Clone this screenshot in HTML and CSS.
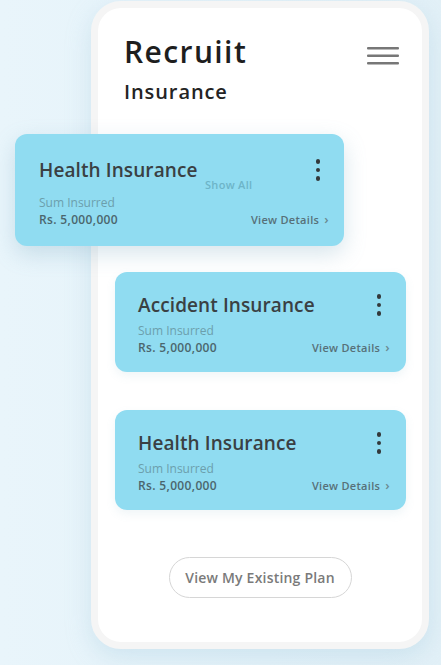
FILE: index.html
```html
<!DOCTYPE html>
<html>
<head>
<meta charset="utf-8">
<link rel="stylesheet" href="styles.css">
</head>
<body>
<div class="phone">
  <div class="screen">
    <header class="top">
      <div class="brand">
        <h1 class="title">Recruiit</h1>
        <h2 class="subtitle">Insurance</h2>
      </div>
      <svg class="menu" width="32" height="20" viewBox="0 0 32 20">
        <rect x="0" y="1" width="32" height="2.6" rx="1" fill="#777"/>
        <rect x="0" y="8.5" width="32" height="2.6" rx="1" fill="#777"/>
        <rect x="0" y="16" width="32" height="2.6" rx="1" fill="#777"/>
      </svg>
    </header>

    <div class="card card-float">
      <div class="card-head">
        <span class="card-title">Health Insurance</span>
        <span class="kebab"><i></i><i></i><i></i></span>
      </div>
      <span class="show-all">Show All</span>
      <div class="card-foot">
        <div class="sum">
          <span class="sum-label">Sum Insurred</span>
          <span class="sum-value">Rs. 5,000,000</span>
        </div>
        <span class="details">View Details <span class="chev">&#8250;</span></span>
      </div>
    </div>

    <div class="card">
      <div class="card-head">
        <span class="card-title">Accident Insurance</span>
        <span class="kebab"><i></i><i></i><i></i></span>
      </div>
      <div class="card-foot">
        <div class="sum">
          <span class="sum-label">Sum Insurred</span>
          <span class="sum-value">Rs. 5,000,000</span>
        </div>
        <span class="details">View Details <span class="chev">&#8250;</span></span>
      </div>
    </div>

    <div class="card">
      <div class="card-head">
        <span class="card-title">Health Insurance</span>
        <span class="kebab"><i></i><i></i><i></i></span>
      </div>
      <div class="card-foot">
        <div class="sum">
          <span class="sum-label">Sum Insurred</span>
          <span class="sum-value">Rs. 5,000,000</span>
        </div>
        <span class="details">View Details <span class="chev">&#8250;</span></span>
      </div>
    </div>

    <div class="actions">
      <button class="plan-btn">View My Existing Plan</button>
    </div>
  </div>
</div>
</body>
</html>
```

FILE: styles.css
```css
* { box-sizing: border-box; }
html, body { margin: 0; padding: 0; }
body {
  width: 441px;
  height: 665px;
  overflow: hidden;
  background: linear-gradient(90deg, #e9f5fb 0%, #e4f2f9 60%, #e2f0f7 100%);
  font-family: "Open Sans", "Noto Sans", sans-serif;
}
.phone {
  margin: 1px 0 0 91px;
  width: 338px;
  height: 648px;
  border: 7px solid #f5f5f5;
  border-radius: 30px;
  background: #fff;
  box-shadow: 0 8px 24px rgba(160, 200, 220, 0.35);
}
.screen {
  display: flex;
  flex-direction: column;
  height: 100%;
}
.top {
  display: flex;
  justify-content: space-between;
  align-items: flex-start;
  padding: 24px 23px 0 26px;
}
.title {
  margin: 0;
  font-size: 30px;
  line-height: 40px;
  font-weight: 600;
  color: #1e1e1e;
  letter-spacing: 1.4px;
}
.subtitle {
  margin: 6px 0 0;
  font-size: 20px;
  line-height: 28px;
  font-weight: 600;
  color: #242424;
  letter-spacing: 0.9px;
}
.menu { margin-top: 14px; }

.card {
  position: relative;
  background: #90dcf1;
  border-radius: 12px;
  margin: 38px 16px 0 17px;
  height: 100px;
  padding: 19px 16px 0 23px;
  display: flex;
  flex-direction: column;
  box-shadow: 0 4px 10px rgba(120, 170, 190, 0.12);
}
.card-float {
  margin: 28px 78px 0 -83px;
  height: 112px;
  padding: 22px 15px 0 24px;
  box-shadow: 0 8px 22px rgba(110, 160, 185, 0.28);
}
.card-float + .card { margin-top: 26px; }

.card-head {
  display: flex;
  justify-content: space-between;
  align-items: flex-start;
}
.card-title {
  font-size: 19px;
  line-height: 28px;
  font-weight: 600;
  color: #3a4043;
  letter-spacing: 0.1px;
}
.kebab {
  display: flex;
  flex-direction: column;
  gap: 4px;
  padding-top: 3px;
  margin-right: 9px;
}
.kebab i {
  display: block;
  width: 4.5px;
  height: 4.5px;
  border-radius: 50%;
  background: #33393b;
}
.show-all {
  position: absolute;
  left: 190px;
  top: 43px;
  font-size: 11px;
  font-weight: 600;
  color: #6db4c8;
  letter-spacing: 0.3px;
}
.card-foot {
  display: flex;
  justify-content: space-between;
  align-items: flex-end;
  margin-top: 4px;
}
.card-float .card-foot { margin-top: 11px; }
.sum { display: flex; flex-direction: column; }
.sum-label {
  font-size: 12px;
  line-height: 16px;
  color: #6c9fac;
}
.sum-value {
  font-size: 12px;
  line-height: 18px;
  font-weight: 600;
  color: #4b666d;
  letter-spacing: 0.35px;
}
.details {
  font-size: 11px;
  line-height: 16px;
  font-weight: 600;
  color: #577078;
  letter-spacing: 0.3px;
  padding-bottom: 1px;
}
.chev {
  font-size: 13px;
  color: #6b8a92;
  margin-left: 2px;
}
.actions {
  display: flex;
  justify-content: center;
  margin-top: 47px;
}
.plan-btn {
  width: 183px;
  height: 41px;
  border: 1.5px solid #d6d6d6;
  border-radius: 21px;
  background: #fff;
  font-family: "Open Sans", "Noto Sans", sans-serif;
  font-size: 14px;
  font-weight: 600;
  color: #7a7a7a;
  letter-spacing: 0.2px;
  padding: 0;
}
```
